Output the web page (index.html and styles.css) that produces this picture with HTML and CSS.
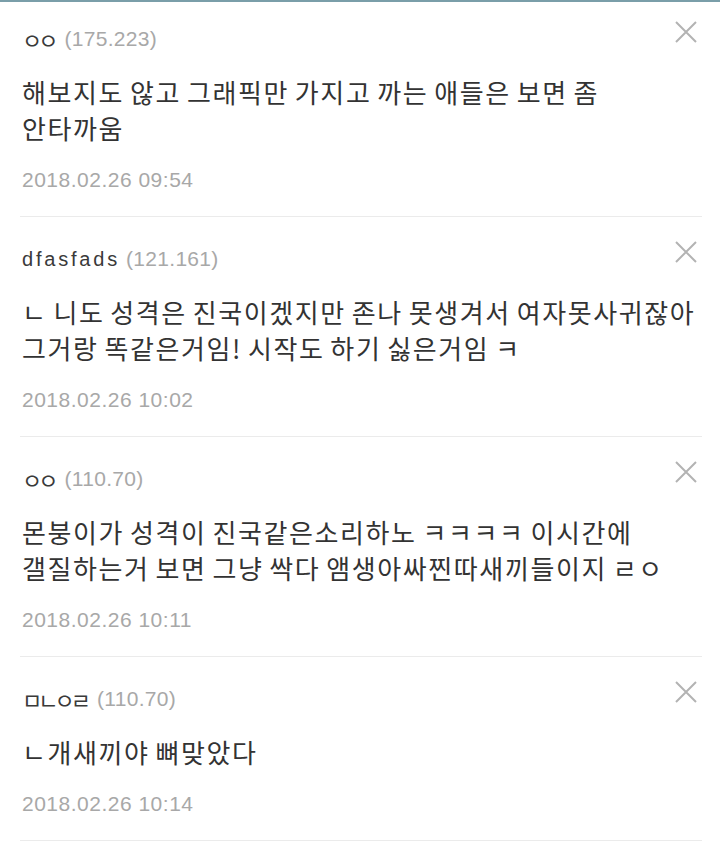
FILE: index.html
```html
<!DOCTYPE html>
<html lang="ko">
<head>
<meta charset="utf-8">
<title>댓글</title>
<link rel="stylesheet" href="styles.css">
</head>
<body>
<div class="topbar"></div>
<ul class="comments">
  <li class="comment">
    <div class="head">
      <span class="name name-ko">ㅇㅇ</span><span class="ip">(175.223)</span>
      <button class="close" aria-label="삭제"><svg viewBox="0 0 24 24" width="24" height="24"><path d="M2 2 L22 22 M22 2 L2 22" stroke="#b3b3b3" stroke-width="2" fill="none"/></svg></button>
    </div>
    <p class="text">해보지도 않고 그래픽만 가지고 까는 애들은 보면 좀<br>안타까움</p>
    <div class="date">2018.02.26 09:54</div>
  </li>
  <li class="comment">
    <div class="head">
      <span class="name">dfasfads</span><span class="ip">(121.161)</span>
      <button class="close" aria-label="삭제"><svg viewBox="0 0 24 24" width="24" height="24"><path d="M2 2 L22 22 M22 2 L2 22" stroke="#b3b3b3" stroke-width="2" fill="none"/></svg></button>
    </div>
    <p class="text">ㄴ 니도 성격은 진국이겠지만 존나 못생겨서 여자못사귀잖아<br>그거랑 똑같은거임! 시작도 하기 싫은거임 ㅋ</p>
    <div class="date">2018.02.26 10:02</div>
  </li>
  <li class="comment">
    <div class="head">
      <span class="name name-ko">ㅇㅇ</span><span class="ip">(110.70)</span>
      <button class="close" aria-label="삭제"><svg viewBox="0 0 24 24" width="24" height="24"><path d="M2 2 L22 22 M22 2 L2 22" stroke="#b3b3b3" stroke-width="2" fill="none"/></svg></button>
    </div>
    <p class="text">몬붕이가 성격이 진국같은소리하노 ㅋㅋㅋㅋ 이시간에<br>갤질하는거 보면 그냥 싹다 앰생아싸찐따새끼들이지 ㄹㅇ</p>
    <div class="date">2018.02.26 10:11</div>
  </li>
  <li class="comment">
    <div class="head">
      <span class="name name-ko">ㅁㄴㅇㄹ</span><span class="ip">(110.70)</span>
      <button class="close" aria-label="삭제"><svg viewBox="0 0 24 24" width="24" height="24"><path d="M2 2 L22 22 M22 2 L2 22" stroke="#b3b3b3" stroke-width="2" fill="none"/></svg></button>
    </div>
    <p class="text">ㄴ개새끼야 뼈맞았다</p>
    <div class="date">2018.02.26 10:14</div>
  </li>
</ul>
</body>
</html>
```
FILE: styles.css
```css
html, body {
  margin: 0;
  padding: 0;
  background: #ffffff;
}
body {
  font-family: "Liberation Sans", "Noto Sans CJK KR", sans-serif;
  color: #333;
}
.topbar {
  height: 2px;
  background: #7a9ea9;
}
.comments {
  list-style: none;
  margin: 0;
  padding: 0 18px 0 20px;
}
.comment {
  padding: 26px 0 21px 2px;
  border-bottom: 1px solid #ebebeb;
}
.comment:first-child {
  padding-top: 21px;
}
.head {
  display: flex;
  align-items: center;
  height: 32px;
  white-space: nowrap;
}
.name {
  font-size: 20px;
  color: #3a3a3a;
  letter-spacing: 2.8px;
  margin-right: 6px;
}
.name-ko {
  font-size: 22px;
  letter-spacing: -4px;
  margin-right: 10px;
}
.ip {
  font-size: 21px;
  color: #a8a8a8;
  letter-spacing: 0.3px;
}
.close {
  margin: -14px 4px 0 auto;
  width: 24px;
  height: 24px;
  padding: 0;
  border: 0;
  background: none;
}
.close svg {
  display: block;
}
.text {
  margin: 19px 0 0;
  font-family: "Noto Sans CJK KR", sans-serif;
  font-size: 26px;
  line-height: 36px;
  letter-spacing: 1.6px;
  word-spacing: -3px;
  color: #333333;
  white-space: nowrap;
}
.date {
  margin-top: 19px;
  height: 30px;
  line-height: 30px;
  font-size: 21px;
  color: #a8a8a8;
  letter-spacing: 0.5px;
}
```
